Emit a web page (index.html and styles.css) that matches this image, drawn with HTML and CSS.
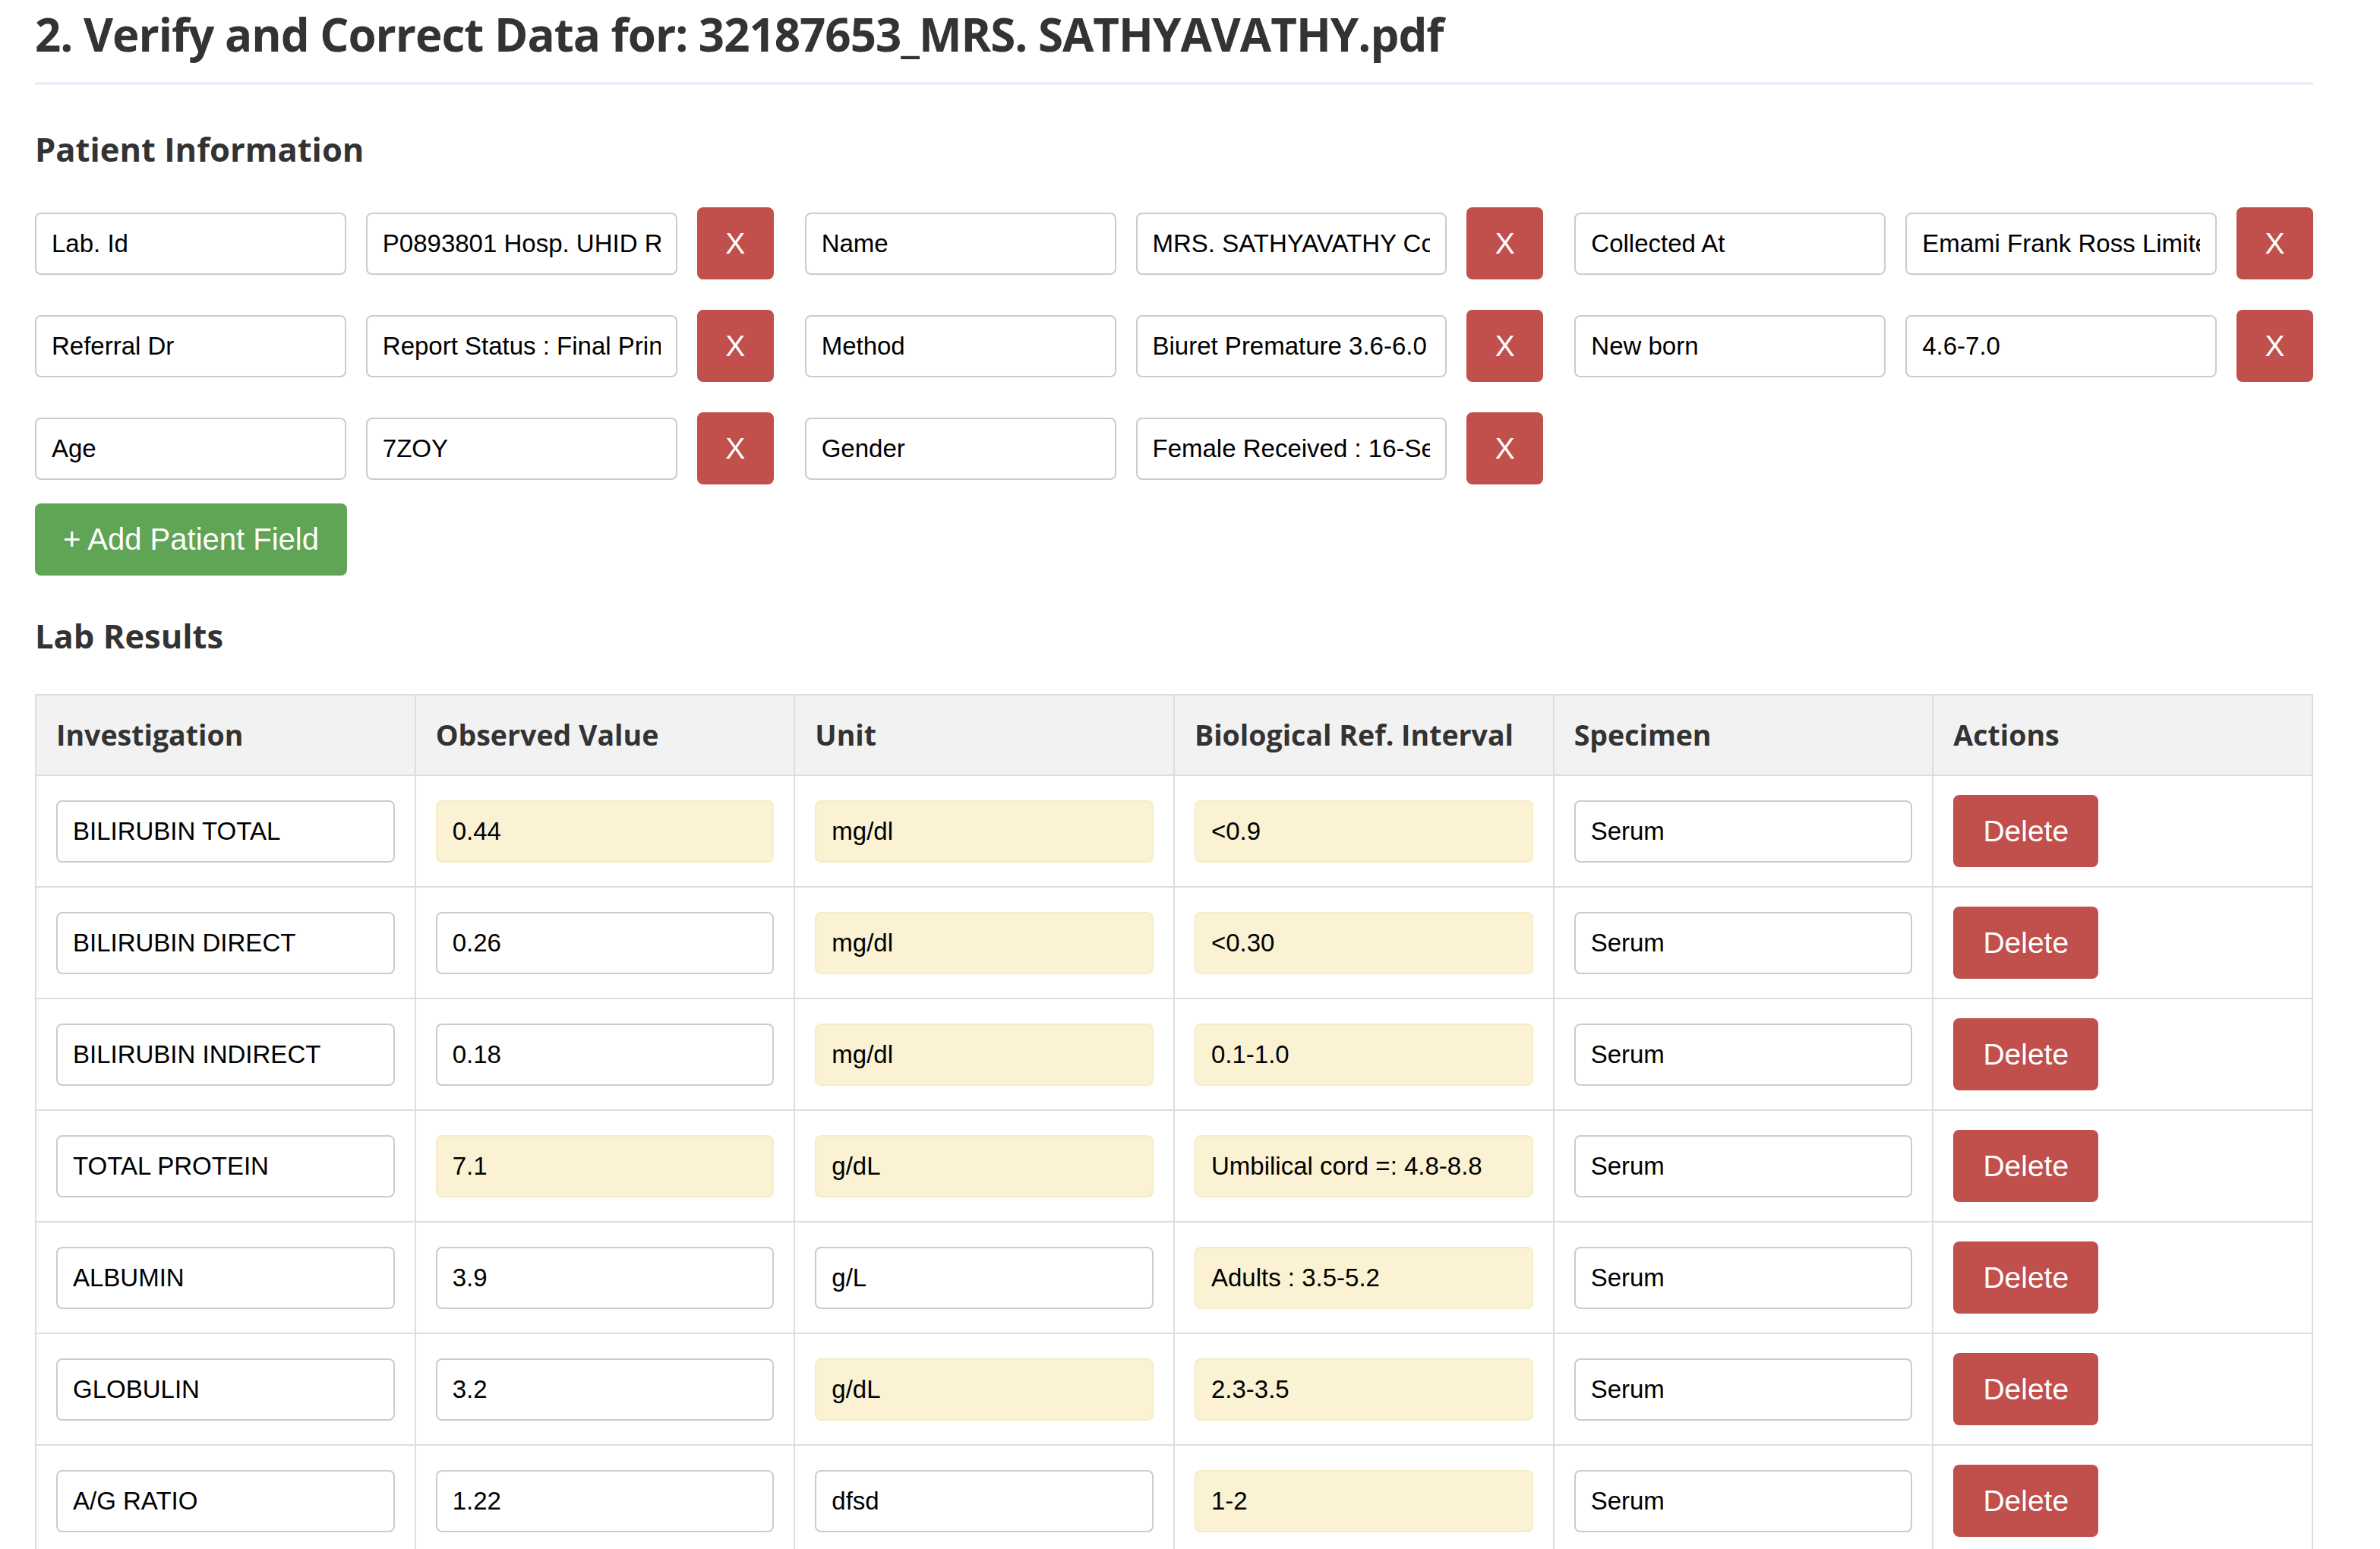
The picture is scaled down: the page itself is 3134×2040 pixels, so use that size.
FILE: index.html
```html
<!DOCTYPE html>
<html lang="en">
<head>
<meta charset="utf-8">
<title>Verify and Correct Data</title>
<link rel="stylesheet" href="styles.css">
</head>
<body>
<div class="page">
  <h1 class="title">2. Verify and Correct Data for: 32187653_MRS. SATHYAVATHY.pdf</h1>

  <h2 class="section-title">Patient Information</h2>
  <div class="fields">
    <div class="field"><input class="inp" value="Lab. Id"><input class="inp" value="P0893801 Hosp. UHID Reg. No"><button class="btn-x">X</button></div>
    <div class="field"><input class="inp" value="Name"><input class="inp" value="MRS. SATHYAVATHY Collected"><button class="btn-x">X</button></div>
    <div class="field"><input class="inp" value="Collected At"><input class="inp" value="Emami Frank Ross Limited"><button class="btn-x">X</button></div>
    <div class="field"><input class="inp" value="Referral Dr"><input class="inp" value="Report Status : Final Printed"><button class="btn-x">X</button></div>
    <div class="field"><input class="inp" value="Method"><input class="inp" value="Biuret Premature 3.6-6.0"><button class="btn-x">X</button></div>
    <div class="field"><input class="inp" value="New born"><input class="inp" value="4.6-7.0"><button class="btn-x">X</button></div>
    <div class="field"><input class="inp" value="Age"><input class="inp" value="7ZOY"><button class="btn-x">X</button></div>
    <div class="field"><input class="inp" value="Gender"><input class="inp" value="Female Received : 16-Sep-2023"><button class="btn-x">X</button></div>
  </div>
  <button class="btn-add">+ Add Patient Field</button>

  <h2 class="section-title lab">Lab Results</h2>
  <table class="results">
    <thead>
      <tr><th>Investigation</th><th>Observed Value</th><th>Unit</th><th>Biological Ref. Interval</th><th>Specimen</th><th>Actions</th></tr>
    </thead>
    <tbody>
      <tr>
        <td><input class="inp" value="BILIRUBIN TOTAL"></td>
        <td><input class="inp warn" value="0.44"></td>
        <td><input class="inp warn" value="mg/dl"></td>
        <td><input class="inp warn" value="&lt;0.9"></td>
        <td><input class="inp" value="Serum"></td>
        <td><button class="btn-del">Delete</button></td>
      </tr>
      <tr>
        <td><input class="inp" value="BILIRUBIN DIRECT"></td>
        <td><input class="inp" value="0.26"></td>
        <td><input class="inp warn" value="mg/dl"></td>
        <td><input class="inp warn" value="&lt;0.30"></td>
        <td><input class="inp" value="Serum"></td>
        <td><button class="btn-del">Delete</button></td>
      </tr>
      <tr>
        <td><input class="inp" value="BILIRUBIN INDIRECT"></td>
        <td><input class="inp" value="0.18"></td>
        <td><input class="inp warn" value="mg/dl"></td>
        <td><input class="inp warn" value="0.1-1.0"></td>
        <td><input class="inp" value="Serum"></td>
        <td><button class="btn-del">Delete</button></td>
      </tr>
      <tr>
        <td><input class="inp" value="TOTAL PROTEIN"></td>
        <td><input class="inp warn" value="7.1"></td>
        <td><input class="inp warn" value="g/dL"></td>
        <td><input class="inp warn" value="Umbilical cord =: 4.8-8.8"></td>
        <td><input class="inp" value="Serum"></td>
        <td><button class="btn-del">Delete</button></td>
      </tr>
      <tr>
        <td><input class="inp" value="ALBUMIN"></td>
        <td><input class="inp" value="3.9"></td>
        <td><input class="inp" value="g/L"></td>
        <td><input class="inp warn" value="Adults : 3.5-5.2"></td>
        <td><input class="inp" value="Serum"></td>
        <td><button class="btn-del">Delete</button></td>
      </tr>
      <tr>
        <td><input class="inp" value="GLOBULIN"></td>
        <td><input class="inp" value="3.2"></td>
        <td><input class="inp warn" value="g/dL"></td>
        <td><input class="inp warn" value="2.3-3.5"></td>
        <td><input class="inp" value="Serum"></td>
        <td><button class="btn-del">Delete</button></td>
      </tr>
      <tr>
        <td><input class="inp" value="A/G RATIO"></td>
        <td><input class="inp" value="1.22"></td>
        <td><input class="inp" value="dfsd"></td>
        <td><input class="inp warn" value="1-2"></td>
        <td><input class="inp" value="Serum"></td>
        <td><button class="btn-del">Delete</button></td>
      </tr>
    </tbody>
  </table>
</div>
</body>
</html>
```

FILE: styles.css
```css
* { box-sizing: border-box; }

html, body {
  margin: 0;
  padding: 0;
  background: #ffffff;
}

body {
  font-family: "Open Sans", "Noto Sans", "Liberation Sans", sans-serif;
  color: #333333;
}

.page {
  width: 3000px;
  margin-left: 46px;
}

.title {
  margin: 0;
  font-size: 60px;
  line-height: 91px;
  letter-spacing: -1px;
  font-weight: 700;
  color: #333333;
  padding-bottom: 17px;
  border-bottom: 4px solid #eeeef8;
}

.section-title {
  margin: 57px 0 48px 0;
  font-size: 43.5px;
  line-height: 56px;
  font-weight: 700;
  color: #333333;
}

.section-title.lab {
  margin-top: 52px;
}

.fields {
  display: grid;
  grid-template-columns: repeat(3, 1fr);
  column-gap: 41px;
  row-gap: 40px;
}

.field {
  display: flex;
  align-items: center;
  gap: 26px;
}

.field .inp {
  flex: 1 1 0;
  min-width: 0;
}

.inp {
  display: block;
  width: 100%;
  height: 82px;
  padding: 0 20px;
  font-family: "Liberation Sans", Arial, sans-serif;
  font-size: 33px;
  color: #000000;
  background: #ffffff;
  border: 2px solid #cccccc;
  border-radius: 8px;
  outline: none;
}

.inp.warn {
  background: #faf2d3;
  border-color: #f6ecc6;
}

.btn-x,
.btn-add,
.btn-del {
  font-family: "Liberation Sans", Arial, sans-serif;
  font-size: 39px;
  color: #ffffff;
  border: none;
  border-radius: 8px;
  height: 95px;
  cursor: pointer;
}

.btn-x {
  flex: 0 0 101px;
  width: 101px;
  padding: 0;
  background: #c14f4c;
}

.btn-add {
  display: block;
  margin-top: 25px;
  width: 411px;
  padding: 0;
  font-size: 40px;
  background: #60a455;
}

.btn-del {
  display: block;
  width: 191px;
  padding: 0;
  background: #c14f4c;
}

.results {
  width: 3000px;
  table-layout: fixed;
  border-collapse: collapse;
}

.results th,
.results td {
  border: 2px solid #dddddd;
  padding: 25px 26px;
  text-align: left;
  vertical-align: middle;
}

.results th {
  background: #f2f2f2;
  font-size: 37.5px;
  line-height: 54px;
  font-weight: 700;
  color: #333333;
}
```
